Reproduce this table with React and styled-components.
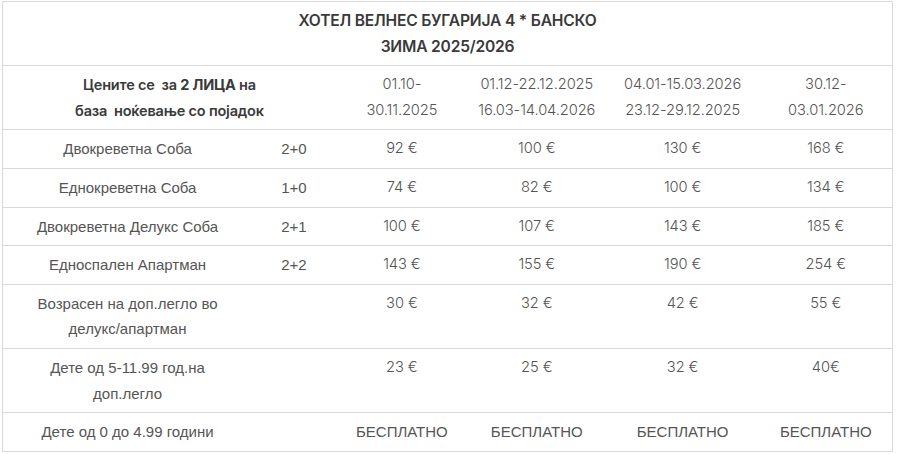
import React from 'react';
import styled, { createGlobalStyle } from 'styled-components';

const GlobalStyle = createGlobalStyle`
    html, body {
        margin: 0;
        padding: 0;
        background: #ffffff;
    }
`;

const Wrapper = styled.div`
    padding: 1px 4px 0 2px;
`;

const Table = styled.table`
    width: 891px;
    border-collapse: collapse;
    border: 1px solid #d9d9d9;
    color: #555555;
    font-family: "Liberation Sans", Arial, sans-serif;
    font-size: 15px;
    line-height: 25.6px;
`;

const Cell = styled.td`
    border-top: 1px solid #d9d9d9;
    padding: 6px 4px;
    text-align: center;
    vertical-align: top;
    font-family: ${(p) => (p.$num ? '"Inter", "Liberation Sans", sans-serif' : 'inherit')};
    font-size: ${(p) => (p.$num ? '14.7px' : '15px')};
    font-weight: ${(p) => (p.$num ? 350 : 400)};
    color: ${(p) => (p.$num ? '#555555' : '#555555')};
    letter-spacing: ${(p) => (p.$num ? '-0.1px' : '0')};
`;

const HeadCell = styled.td`
    border-top: 1px solid #d9d9d9;
    padding: 6px 4px;
    text-align: center;
    vertical-align: top;
    font-family: "Inter", "Liberation Sans", sans-serif;
    font-size: ${(p) => (p.$title ? '15.6px' : '14.5px')};
    font-weight: 600;
    color: #3a3a3a;
    letter-spacing: -0.2px;
`;

const Strong = styled.b`
    font-weight: 700;
`;

const widths = [250, 84, 132, 138, 154, 133];

const periods = [
    ['01.10-', '30.11.2025'],
    ['01.12-22.12.2025', '16.03-14.04.2026'],
    ['04.01-15.03.2026', '23.12-29.12.2025'],
    ['30.12-', '03.01.2026'],
];

const rows = [
    { name: 'Двокреветна Соба', occ: '2+0', prices: ['92 €', '100 €', '130 €', '168 €'] },
    { name: 'Еднокреветна Соба', occ: '1+0', prices: ['74 €', '82 €', '100 €', '134 €'] },
    { name: 'Двокреветна Делукс Соба', occ: '2+1', prices: ['100 €', '107 €', '143 €', '185 €'] },
    { name: 'Едноспален Апартман', occ: '2+2', prices: ['143 €', '155 €', '190 €', '254 €'] },
    { name: ['Возрасен на доп.легло во', 'делукс/апартман'], occ: '', prices: ['30 €', '32 €', '42 €', '55 €'] },
    { name: ['Дете од 5-11.99 год.на', 'доп.легло'], occ: '', prices: ['23 €', '25 €', '32 €', '40€'] },
];

const free = 'БЕСПЛАТНО';

function Lines({ text }) {
    if (!Array.isArray(text)) return text;
    return text.map((t, i) => (
        <React.Fragment key={i}>
            {i > 0 && <br />}
            {t}
        </React.Fragment>
    ));
}

export default function App() {
    return (
        <>
            <GlobalStyle />
            <Wrapper>
                <Table>
                    <colgroup>
                        {widths.map((w, i) => <col key={i} style={{ width: w }} />)}
                    </colgroup>
                    <tbody>
                        <tr>
                            <HeadCell colSpan={6} $title>
                                ХОТЕЛ ВЕЛНЕС БУГАРИЈА 4 * БАНСКО<br />
                                ЗИМА 2025/2026
                            </HeadCell>
                        </tr>
                        <tr>
                            <HeadCell colSpan={2}>
                                Цените се&nbsp; за <Strong>2 ЛИЦА</Strong> на<br />
                                база&nbsp; ноќевање со појадок
                            </HeadCell>
                            {periods.map((p, i) => (
                                <Cell key={i} $num>
                                    <Lines text={p} />
                                </Cell>
                            ))}
                        </tr>
                        {rows.map((r, i) => (
                            <tr key={i}>
                                <Cell><Lines text={r.name} /></Cell>
                                <Cell>{r.occ}</Cell>
                                {r.prices.map((p, j) => (
                                    <Cell key={j} $num>{p}</Cell>
                                ))}
                            </tr>
                        ))}
                        <tr>
                            <Cell>Дете од 0 до 4.99 години</Cell>
                            <Cell />
                            {[0, 1, 2, 3].map((j) => (
                                <Cell key={j}>{free}</Cell>
                            ))}
                        </tr>
                    </tbody>
                </Table>
            </Wrapper>
        </>
    );
}
